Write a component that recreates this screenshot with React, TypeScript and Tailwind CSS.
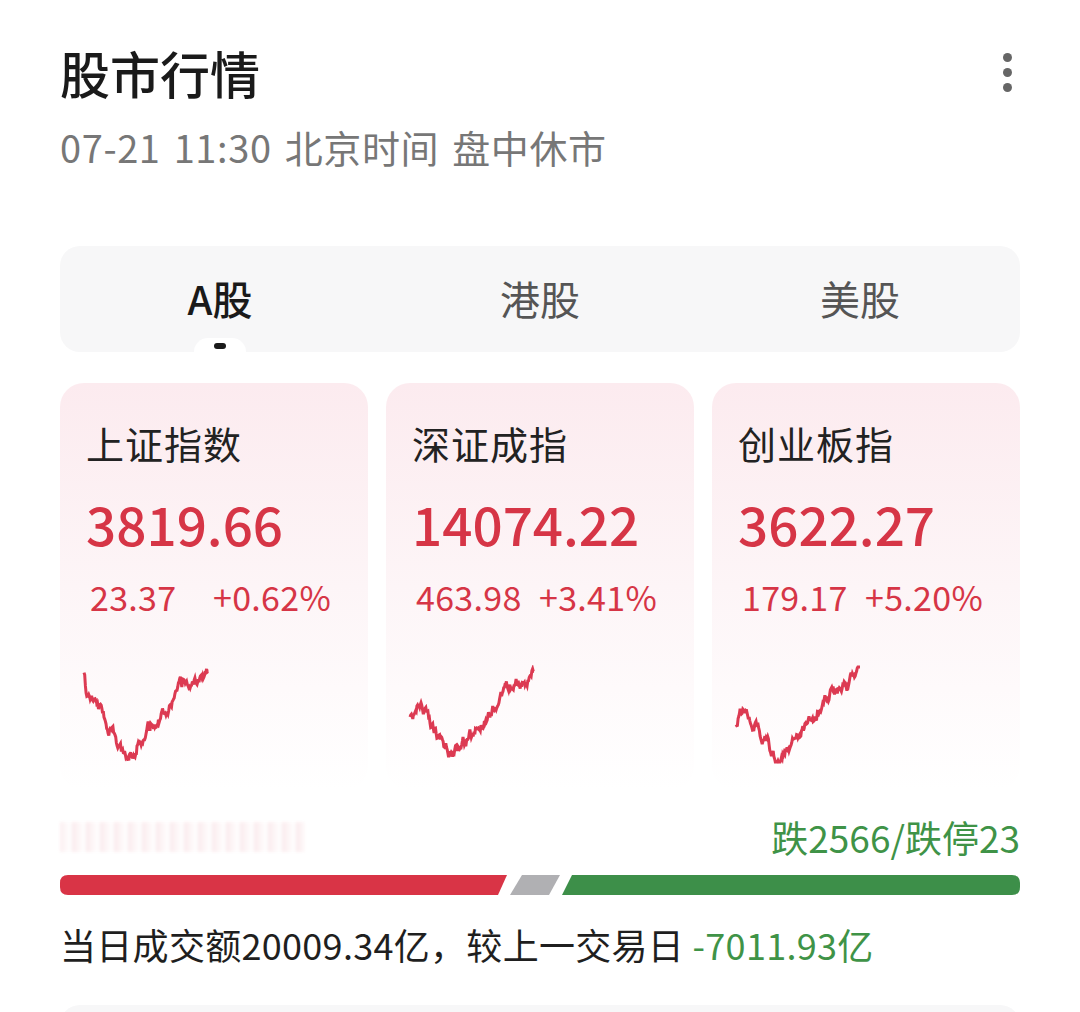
import React from "react";

type IndexCard = {
  name: string;
  price: string;
  change: string;
  percent: string;
  seed: number;
  anchors: [number, number][];
};

const cards: IndexCard[] = [
  {
    name: "上证指数",
    price: "3819.66",
    change: "23.37",
    percent: "+0.62%",
    seed: 7,
    anchors: [
      [0, 12],
      [0.02, 30],
      [0.12, 42],
      [0.33, 93],
      [0.6, 52],
      [0.8, 20],
      [0.9, 16],
      [1, 4],
    ],
  },
  {
    name: "深证成指",
    price: "14074.22",
    change: "463.98",
    percent: "+3.41%",
    seed: 19,
    anchors: [
      [0, 56],
      [0.06, 40],
      [0.12, 48],
      [0.34, 93],
      [0.6, 55],
      [0.8, 22],
      [0.9, 18],
      [1, 4],
    ],
  },
  {
    name: "创业板指",
    price: "3622.27",
    change: "179.17",
    percent: "+5.20%",
    seed: 31,
    anchors: [
      [0, 58],
      [0.06, 42],
      [0.14, 56],
      [0.33, 93],
      [0.6, 58],
      [0.8, 25],
      [0.9, 20],
      [1, 4],
    ],
  },
];

// small seeded rng so the intraday lines stay the same on every render
function rng(seed: number) {
  let s = seed >>> 0;
  return () => {
    s = (s + 0x6d2b79f5) >>> 0;
    let t = s;
    t = Math.imul(t ^ (t >>> 15), t | 1);
    t ^= t + Math.imul(t ^ (t >>> 7), t | 61);
    return ((t ^ (t >>> 14)) >>> 0) / 4294967296;
  };
}

function buildPath(anchors: [number, number][], seed: number, w: number) {
  const rand = rng(seed);
  const n = 180;
  let noise = 0;
  const pts: string[] = [];
  for (let i = 0; i <= n; i++) {
    const t = i / n;
    let k = 0;
    while (k < anchors.length - 2 && anchors[k + 1][0] < t) k++;
    const [t0, y0] = anchors[k];
    const [t1, y1] = anchors[k + 1];
    const base = y0 + ((y1 - y0) * (t - t0)) / (t1 - t0);
    noise = noise * 0.75 + (rand() - 0.5) * 9;
    const y = Math.min(97, Math.max(2, base + noise));
    pts.push(`${(t * w).toFixed(1)},${y.toFixed(1)}`);
  }
  return "M" + pts.join(" L");
}

function Sparkline({ card }: { card: IndexCard }) {
  const d = buildPath(card.anchors, card.seed, 124);
  return (
    <svg width="128" height="100" viewBox="-2 0 128 100" className="block">
      <path d={d} fill="none" stroke="#dc3a52" strokeWidth="3" strokeLinejoin="miter" />
    </svg>
  );
}

function BreadthBar() {
  // up / flat / down split of the market
  return (
    <svg width="960" height="20" viewBox="0 0 960 20" className="block">
      <path d="M8,0 L447,0 L438,20 L8,20 Q0,20 0,12 L0,8 Q0,0 8,0 Z" fill="#d93446" />
      <path d="M462,0 L500,0 L489,20 L450,20 Z" fill="#b0b0b3" />
      <path d="M512,0 L952,0 Q960,0 960,8 L960,12 Q960,20 952,20 L502,20 Z" fill="#3d8f49" />
    </svg>
  );
}

export default function App() {
  const font = "font-['Noto_Sans_CJK_SC','Noto_Sans',sans-serif]";
  return (
    <div className={`w-[1080px] h-[1012px] overflow-hidden bg-white px-[60px] ${font}`}>
      {/* Header */}
      <div className="flex items-center justify-between pt-[42px]">
        <h1 className="text-[50px] leading-[60px] font-medium text-[#1a1a1a]">股市行情</h1>
        <div className="flex flex-col gap-[6px] mr-[8px]">
          <span className="w-[9px] h-[9px] rounded-full bg-[#666]" />
          <span className="w-[9px] h-[9px] rounded-full bg-[#666]" />
          <span className="w-[9px] h-[9px] rounded-full bg-[#666]" />
        </div>
      </div>
      <p className="mt-[22px] text-[38px] leading-[46px] tracking-[0.6px] text-[#777] [word-spacing:4px]">
        07-21 11:30 北京时间 盘中休市
      </p>

      {/* Market tabs */}
      <div className="relative mt-[76px] h-[106px] rounded-[20px] bg-[#f7f7f8] grid grid-cols-3">
        <div className="flex items-center justify-center text-[40px] leading-none text-[#1a1a1a] font-medium pb-[2px]">
          A股
        </div>
        <div className="flex items-center justify-center text-[40px] leading-none text-[#555] pb-[2px]">港股</div>
        <div className="flex items-center justify-center text-[40px] leading-none text-[#555] pb-[2px]">美股</div>
        <div className="absolute bottom-0 left-[134px] w-[52px] h-[14px] rounded-t-[26px] bg-white flex items-center justify-center">
          <span className="w-[12px] h-[6px] rounded-full bg-[#1a1a1a] mt-[2px]" />
        </div>
      </div>

      {/* Index cards */}
      <div className="mt-[31px] grid grid-cols-3 gap-[18px]">
        {cards.map((c) => (
          <div
            key={c.name}
            className="h-[407px] rounded-[24px] bg-gradient-to-b from-[#fcebef] via-[#fdf5f7] to-white pt-[36px] pl-[26px]"
          >
            <div className="text-[38px] leading-[48px] text-[#222] tracking-[1px]">{c.name}</div>
            <div className="mt-[24px] text-[53px] leading-[64px] font-medium text-[#d63546]">{c.price}</div>
            <div className="mt-[20px] flex text-[34px] leading-[44px] text-[#d63546] pl-[4px] tracking-[0.3px]">
              <span className="w-[123px]">{c.change}</span>
              <span>{c.percent}</span>
            </div>
            <div className="mt-[46px] -ml-[4px]">
              <Sparkline card={c} />
            </div>
          </div>
        ))}
      </div>

      {/* Breadth */}
      <div className="mt-[24px] flex items-center justify-between">
        <div className="w-[245px] h-[30px] opacity-40 blur-[1.5px] bg-[repeating-linear-gradient(90deg,#f6d5da_0px,#fdeef0_6px,#fff_10px,#f3c9cf_14px)]" />
        <span className="text-[37px] leading-[46px] text-[#3f9347]">跌2566/跌停23</span>
      </div>
      <div className="mt-[15px]">
        <BreadthBar />
      </div>

      <p className="mt-[26px] text-[36px] leading-[46px] tracking-[0.3px] text-[#1f1f1f]">
        当日成交额20009.34亿，较上一交易日 <span className="text-[#3f9347]">-7011.93亿</span>
      </p>

      <div className="mt-[38px] h-[60px] rounded-t-[20px] bg-[#f7f7f8]" />
    </div>
  );
}
